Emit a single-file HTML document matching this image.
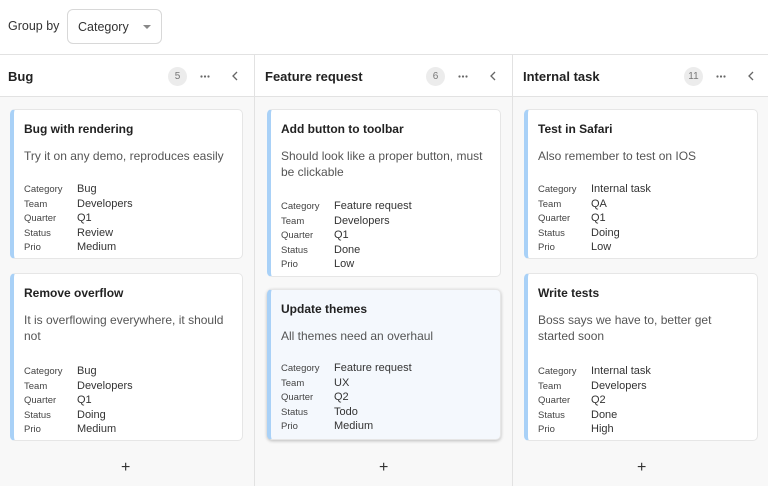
<!DOCTYPE html>
<html><head><style>
*{box-sizing:border-box;margin:0;padding:0}
body{width:768px;height:486px;overflow:hidden;background:#fff;font-family:"Liberation Sans",sans-serif;color:#222;position:relative}
.top{position:absolute;left:0;top:0;width:768px;height:55px;border-bottom:1px solid #e2e2e2}
.gb{position:absolute;left:8px;top:19px;font-size:12.5px;color:#333}
.sel{position:absolute;left:67px;top:9px;width:95px;height:35px;border:1px solid #d8d8d8;border-radius:6px;font-size:12.5px;padding:10px 0 0 10px;color:#333}
.sel:after{content:"";position:absolute;left:75px;top:15px;border-left:4px solid transparent;border-right:4px solid transparent;border-top:4px solid #888}
.col{position:absolute;top:55px;height:431px;background:#f8f8f8;border-right:1px solid #e2e2e2}
.hd{position:absolute;left:0;top:0;right:0;height:42px;background:#fff;border-bottom:1px solid #e2e2e2}
.hd b{position:absolute;left:8px;top:14px;font-size:13px;font-weight:700}
.cnt{position:absolute;top:12px;width:19px;height:19px;border-radius:50%;background:#ececec;font-size:10px;color:#777;text-align:center;line-height:19px}
.dots{position:absolute;top:20px}
.chev{position:absolute;top:16px}
.card{position:absolute;background:#fff;border:1px solid #e6e6e6;border-left:4px solid #a9d1f7;border-radius:5px}
.card.hl{background:#f4f8fd;box-shadow:0 1px 3px rgba(0,0,0,.25)}
.t{position:absolute;left:10px;top:12px;font-size:12px;font-weight:700;color:#222}
.d{position:absolute;left:10px;top:38px;right:10px;font-size:12px;color:#555;line-height:16px}
.f{position:absolute;left:10px}
.f div{height:14.5px;line-height:14.5px;white-space:nowrap;overflow:visible}
.f span{display:inline-block;width:53px;font-size:9.5px;color:#444;vertical-align:baseline}
.f i{font-style:normal;font-size:11px;color:#333;vertical-align:baseline}
.plus{position:absolute;top:404px;font-size:16px;color:#333}
</style></head><body>
<div class="top"><div class="gb">Group by</div><div class="sel">Category</div></div>

<div class="col" style="left:0;width:255px">
 <div class="hd"><b>Bug</b><div class="cnt" style="left:168px">5</div><svg class="dots" style="left:200px" width="10" height="3"><circle cx="1.5" cy="1.5" r="1.1" fill="#666"/><circle cx="5" cy="1.5" r="1.1" fill="#666"/><circle cx="8.5" cy="1.5" r="1.1" fill="#666"/></svg><svg class="chev" style="left:232px" width="6" height="10"><path d="M5 1L1 5l4 4" stroke="#666" stroke-width="1.3" fill="none"/></svg></div>
 <div class="card" style="left:10px;top:54px;width:233px;height:150px"><div class="t">Bug with rendering</div><div class="d">Try it on any demo, reproduces easily</div>
 <div class="f" style="top:71px"><div><span>Category</span><i>Bug</i></div><div><span>Team</span><i>Developers</i></div><div><span>Quarter</span><i>Q1</i></div><div><span>Status</span><i>Review</i></div><div><span>Prio</span><i>Medium</i></div></div></div>
 <div class="card" style="left:10px;top:218px;width:233px;height:168px"><div class="t">Remove overflow</div><div class="d">It is overflowing everywhere, it should not</div>
 <div class="f" style="top:89px"><div><span>Category</span><i>Bug</i></div><div><span>Team</span><i>Developers</i></div><div><span>Quarter</span><i>Q1</i></div><div><span>Status</span><i>Doing</i></div><div><span>Prio</span><i>Medium</i></div></div></div>
 <div class="plus" style="left:121px">+</div>
</div>

<div class="col" style="left:255px;width:258px">
 <div class="hd"><b style="left:10px">Feature request</b><div class="cnt" style="left:171px">6</div><svg class="dots" style="left:203px" width="10" height="3"><circle cx="1.5" cy="1.5" r="1.1" fill="#666"/><circle cx="5" cy="1.5" r="1.1" fill="#666"/><circle cx="8.5" cy="1.5" r="1.1" fill="#666"/></svg><svg class="chev" style="left:235px" width="6" height="10"><path d="M5 1L1 5l4 4" stroke="#666" stroke-width="1.3" fill="none"/></svg></div>
 <div class="card" style="left:12px;top:54px;width:234px;height:168px"><div class="t">Add button to toolbar</div><div class="d">Should look like a proper button, must be clickable</div>
 <div class="f" style="top:88px"><div><span>Category</span><i>Feature request</i></div><div><span>Team</span><i>Developers</i></div><div><span>Quarter</span><i>Q1</i></div><div><span>Status</span><i>Done</i></div><div><span>Prio</span><i>Low</i></div></div></div>
 <div class="card hl" style="left:12px;top:234px;width:234px;height:151px"><div class="t">Update themes</div><div class="d">All themes need an overhaul</div>
 <div class="f" style="top:70px"><div><span>Category</span><i>Feature request</i></div><div><span>Team</span><i>UX</i></div><div><span>Quarter</span><i>Q2</i></div><div><span>Status</span><i>Todo</i></div><div><span>Prio</span><i>Medium</i></div></div></div>
 <div class="plus" style="left:124px">+</div>
</div>

<div class="col" style="left:513px;width:255px;border-right:none">
 <div class="hd"><b style="left:10px">Internal task</b><div class="cnt" style="left:171px">11</div><svg class="dots" style="left:203px" width="10" height="3"><circle cx="1.5" cy="1.5" r="1.1" fill="#666"/><circle cx="5" cy="1.5" r="1.1" fill="#666"/><circle cx="8.5" cy="1.5" r="1.1" fill="#666"/></svg><svg class="chev" style="left:235px" width="6" height="10"><path d="M5 1L1 5l4 4" stroke="#666" stroke-width="1.3" fill="none"/></svg></div>
 <div class="card" style="left:11px;top:54px;width:234px;height:150px"><div class="t">Test in Safari</div><div class="d">Also remember to test on IOS</div>
 <div class="f" style="top:71px"><div><span>Category</span><i>Internal task</i></div><div><span>Team</span><i>QA</i></div><div><span>Quarter</span><i>Q1</i></div><div><span>Status</span><i>Doing</i></div><div><span>Prio</span><i>Low</i></div></div></div>
 <div class="card" style="left:11px;top:218px;width:234px;height:168px"><div class="t">Write tests</div><div class="d">Boss says we have to, better get started soon</div>
 <div class="f" style="top:89px"><div><span>Category</span><i>Internal task</i></div><div><span>Team</span><i>Developers</i></div><div><span>Quarter</span><i>Q2</i></div><div><span>Status</span><i>Done</i></div><div><span>Prio</span><i>High</i></div></div></div>
 <div class="plus" style="left:124px">+</div>
</div>
</body></html>
